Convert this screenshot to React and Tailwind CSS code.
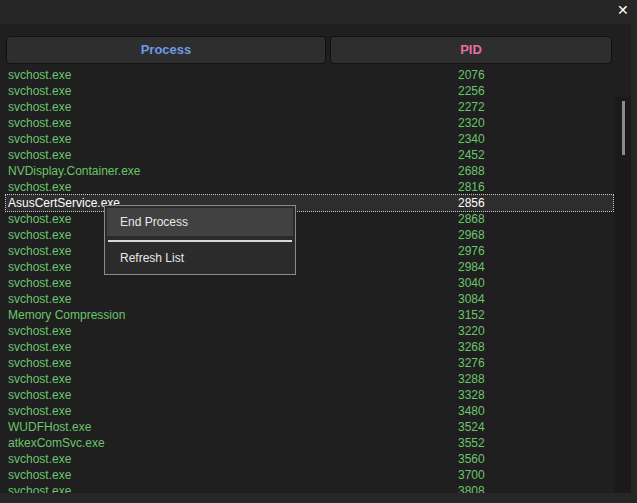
const rows = [
["svchost.exe",2076],["svchost.exe",2256],["svchost.exe",2272],["svchost.exe",2320],["svchost.exe",2340],["svchost.exe",2452],["NVDisplay.Container.exe",2688],["svchost.exe",2816],["AsusCertService.exe",2856],["svchost.exe",2868],["svchost.exe",2968],["svchost.exe",2976],["svchost.exe",2984],["svchost.exe",3040],["svchost.exe",3084],["Memory Compression",3152],["svchost.exe",3220],["svchost.exe",3268],["svchost.exe",3276],["svchost.exe",3288],["svchost.exe",3328],["svchost.exe",3480],["WUDFHost.exe",3524],["atkexComSvc.exe",3552],["svchost.exe",3560],["svchost.exe",3700],["svchost.exe",3808]];

export default function App() {
  return (
    <div className="w-[637px] h-[503px] bg-[#262626] relative overflow-hidden text-[12px]" style={{fontFamily:'"Liberation Sans","Noto Sans",sans-serif'}}>
      <div className="h-[24px] flex justify-end items-start">
        <span className="text-white text-[14px] leading-none mr-[8px] mt-[3px]">✕</span>
      </div>
      <div className="w-[631px] h-[469px] bg-[#1f1f1f] flex overflow-hidden">
        <div className="flex-1 flex flex-col pl-[6px] pt-[12px]">
          <div className="flex gap-[4px] h-[28px] w-[606px] shrink-0">
            <div className="w-[320px] rounded-[4px] border border-[#111] bg-[#2e2e2e] flex items-center justify-center text-[#6b9be2] font-bold text-[13px]">Process</div>
            <div className="flex-1 rounded-[4px] border border-[#111] bg-[#2e2e2e] flex items-center justify-center text-[#e4709e] font-bold text-[13px]">PID</div>
          </div>
          <div className="mt-[3px] flex flex-col">
            {rows.map(([n,p],i)=>{
              const sel = i===8;
              return (
                <div key={i} className={`flex h-[16px] items-center leading-none w-[607px] ${sel?"bg-[#2e2e2e] outline outline-1 outline-dotted outline-[#cfcfcf] text-white":"text-[#6cc46c]"}`}>
                  <span className="w-[452px] pl-[2px]">{n}</span>
                  <span>{p}</span>
                </div>
              );
            })}
          </div>
        </div>
        <div className="w-[17px] bg-[#1a1a1a] relative mt-[73px] h-[396px] shrink-0">
          <div className="absolute left-[8px] top-[4px] w-[3px] h-[54px] bg-[#8a8a8a]"></div>
        </div>
      </div>
      <div className="absolute left-[104px] top-[205px] w-[192px] h-[70px] bg-[#2b2b2b] border border-[#8a8a8a] p-[2px] text-[#e8e8e8]">
        <div className="h-[28px] bg-[#414141] flex items-center pl-[13px]">End Process</div>
        <div className="h-[2px] bg-[#d8d8d8] mx-[1px] mt-[4px]"></div>
        <div className="h-[28px] flex items-center pl-[13px] mt-[2px]">Refresh List</div>
      </div>
    </div>
  );
}
